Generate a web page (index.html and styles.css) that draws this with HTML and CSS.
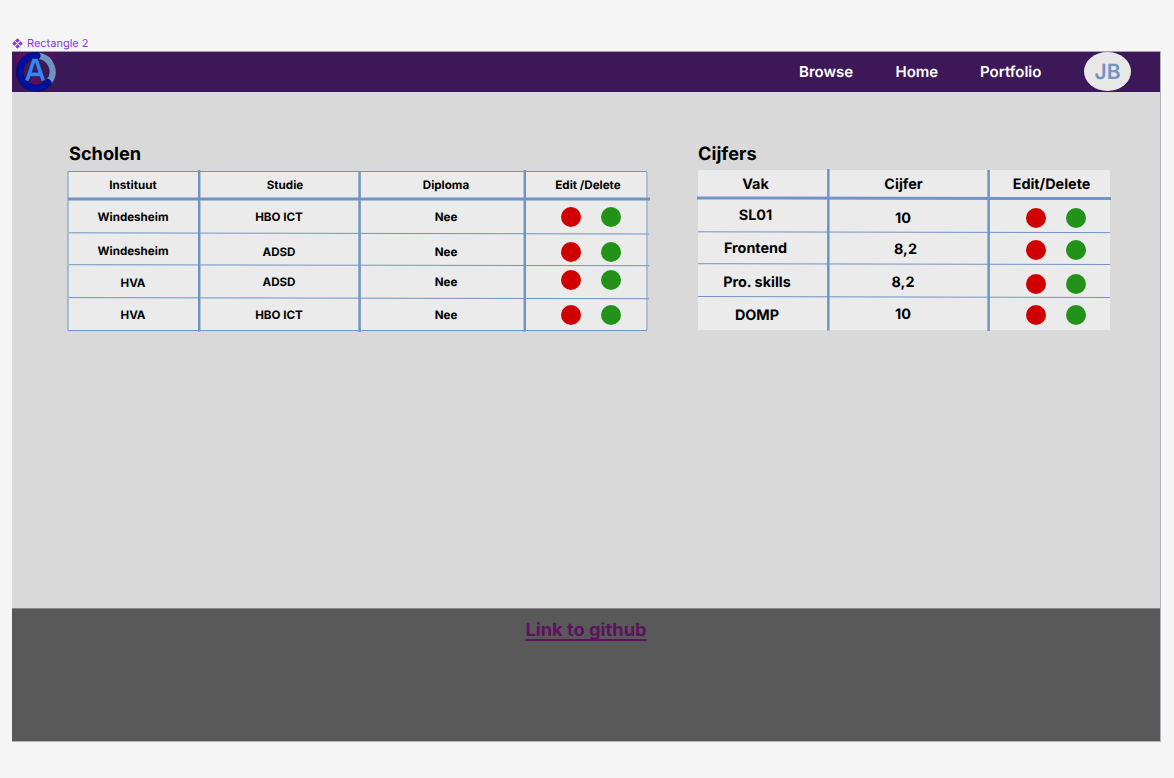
FILE: index.html
```html
<!DOCTYPE html>
<html lang="nl">
<head>
<meta charset="utf-8">
<title>Rectangle 2</title>
<link rel="stylesheet" href="styles.css">
</head>
<body>
<div class="frame-label">
  <svg class="component-icon" viewBox="0 0 12 12"><path d="M6 .2 8.500 2.700 6 5.200 3.500 2.700ZM6 6.800 8.500 9.300 6 11.800 3.500 9.300ZM2.700 3.500 5.200 6 2.700 8.500.2 6ZM9.300 3.500 11.800 6 9.300 8.500 6.800 6Z"/></svg>
  <span>Rectangle 2</span>
</div>
<div class="page">
  <header class="topbar">
    <svg class="logo" viewBox="0 0 44 41">
      <rect x="4" y="1" width="39" height="9.500" fill="#56105c"/>
      <circle cx="24" cy="19.800" r="15" fill="#3d1858"/>
      <path d="M12 9.500h24v1H12z" fill="#56105c"/>
      <path d="M19 25h9v9h-9z" fill="#56105c"/>
      <path d="M27 3.700A16.300 16.300 0 0 1 37 30" fill="none" stroke="#233868" stroke-width="7"/>
      <path d="M27 3.700A16.300 16.300 0 0 1 37 30" fill="none" stroke="#7093c1" stroke-width="6"/>
      <path d="M25 3.800A16.200 16.200 0 1 0 36 30.800" fill="none" stroke="#07095f" stroke-width="7" stroke-linecap="round"/>
      <path d="M25 3.800A16.200 16.200 0 1 0 36 30.800" fill="none" stroke="#00109e" stroke-width="6" stroke-linecap="round"/>
      <path d="M14.800 28.700 21.600 8.500H24.600L31.400 28.700M17.500 22.400H28.600" fill="none" stroke="#2b4c9c" stroke-width="4"/>
      <path d="M15 28.400 21.800 8.700H24.400L31.200 28.400M17.500 22.400H28.600" fill="none" stroke="#3385fa" stroke-width="3.200"/>
    </svg>
    <nav class="nav">
      <a class="browse">Browse</a><a class="home">Home</a><a class="portfolio">Portfolio</a>
    </nav>
    <div class="avatar">JB</div>
  </header>
  <main class="content">
    <section class="schools">
      <h2>Scholen</h2>
      <div class="table">
        <div class="row head"><span>Instituut</span><span class="studie">Studie</span><span class="mid">Diploma</span><span class="actions-head">Edit /Delete</span></div>
        <div class="row r1"><span>Windesheim</span><span>HBO ICT</span><span class="mid">Nee</span><span class="actions"><i class="dot red"></i><i class="dot green"></i></span></div>
        <div class="row r2"><span class="up">Windesheim</span><span>ADSD</span><span class="mid">Nee</span><span class="actions"><i class="dot red"></i><i class="dot green"></i></span></div>
        <div class="row r3"><span class="low">HVA</span><span>ADSD</span><span class="mid">Nee</span><span class="actions"><i class="dot red"></i><i class="dot green"></i></span></div>
        <div class="row r4"><span>HVA</span><span>HBO ICT</span><span class="mid">Nee</span><span class="actions"><i class="dot red"></i><i class="dot green"></i></span></div>
        <svg class="rules" viewBox="0 0 590 170">
          <path class="thin" d="M5 6.500H584V165.500H5Z"/>
          <path class="thin" d="M6 67.800 586 69M6 99.700 586 100.700M6 132.600 586 133.700"/>
          <path class="thick" d="M5 33.900H587"/>
          <path class="bar" d="M136.200 5V166.500M296.600 6V167M461.800 5V166.500"/>
        </svg>
      </div>
    </section>
    <section class="grades">
      <h2>Cijfers</h2>
      <div class="table">
        <div class="row head"><span>Vak</span><span>Cijfer</span><span>Edit/Delete</span></div>
        <div class="row g1"><span>SL01</span><span class="score">10</span><span class="actions"><i class="dot red"></i><i class="dot green"></i></span></div>
        <div class="row g2"><span>Frontend</span><span class="score">8,2</span><span class="actions"><i class="dot red"></i><i class="dot green"></i></span></div>
        <div class="row g3"><span>Pro. skills</span><span class="score">8,2</span><span class="actions"><i class="dot red"></i><i class="dot green"></i></span></div>
        <div class="row g4"><span>DOMP</span><span class="score">10</span><span class="actions"><i class="dot red"></i><i class="dot green"></i></span></div>
        <svg class="rules" viewBox="0 0 422 170">
          <path class="thin" d="M5 66.800 417 67.600M5 98.700 417 99.500M5 131.500 417 132.500"/>
          <path class="thick" d="M4 33 418 33.600"/>
          <path class="bar" d="M135.300 4V165.500M295.600 5V166"/>
        </svg>
      </div>
    </section>
  </main>
  <footer class="footer"><a>Link to github</a></footer>
</div>
</body>
</html>
```
FILE: styles.css
```css
* { box-sizing: border-box; }
body { margin: 0; background: #f5f5f5; font-family: Inter, "Liberation Sans", sans-serif; color: #000; text-rendering: geometricPrecision; }
.frame-label { display: flex; align-items: center; gap: 4px; height: 15px; margin: 36px 0 0 12px; color: #8638e5; font-size: 11px; line-height: 15px; }
.component-icon { width: 11px; height: 11px; margin-bottom: 1px; fill: #8638e5; }
.page { width: 1149px; height: 691px; margin-left: 12px; display: flex; flex-direction: column; border: 1px solid #b9b3bd; border-width: 0 1px 1px 0; background: #d9d9d9; }
.topbar { display: flex; align-items: center; height: 41px; background: #3d1859; border-top: 1px solid #a89bb2; color: #fff; }
.logo { width: 44px; height: 41px; flex: none; }
.nav { display: flex; margin: 0 0 1px 743px; font-size: 15px; font-weight: 600; line-height: 20px; }
.nav a { white-space: nowrap; }
.browse { width: 96.5px; }
.home { width: 84.5px; }
.portfolio { width: 104px; }
.avatar { width: 47px; height: 39px; margin-bottom: 2px; border-radius: 50%; background: #e8e8e8; color: #7194c4; font-size: 21px; font-weight: 600; line-height: 41px; text-align: center; }
.content { display: flex; height: 516px; padding: 49px 0 0 56px; gap: 50px; }
h2 { margin: 0 0 6px 1px; padding-top: 1px; height: 24px; font-size: 18.2px; line-height: 25px; font-weight: 700; }
.schools { width: 580px; }
.grades { width: 412px; }
.grades h2 { margin-left: 0; }
.schools .table { position: relative; background: #ebebeb; font-size: 11.6px; font-weight: 700; height: 160px; }
.grades .table { position: relative; background: #ebebeb; font-size: 14.4px; font-weight: 650; height: 160px; margin-top: -1px; }
.row { display: grid; height: 33px; }
.schools .row { grid-template-columns: 130px 162px 165px 123px; }
.grades .row { grid-template-columns: 130px 160px 122px; }
.row span { display: flex; align-items: center; justify-content: center; white-space: nowrap; }
.row.head { height: 28px; }
.schools .head { height: 27px; margin-bottom: 1px; }
.studie { padding-left: 12px; }
.schools .mid { padding-left: 7px; }
.actions-head { padding-left: 3px; }
.row .actions { gap: 20px; padding-left: 9px; }
.dot { width: 20px; height: 20px; border-radius: 50%; }
.red { background: #d00000; }
.green { background: #229318; }
.schools .r1 { height: 34px; padding-top: 1px; }
.schools .r1 .actions { padding-top: 1px; }
.schools .r2 { height: 32px; padding-top: 6px; }
.schools .r2 .up { padding-bottom: 3px; }
.schools .r3 .low { padding-top: 2px; }
.schools .r3 .actions { padding-bottom: 4px; }
.schools .r3 { padding-top: 1px; }
.grades .row span:first-child { padding-right: 15px; }
.grades .row.head span { padding-top: 1px; }
.grades .head span:nth-child(2) { padding-right: 9px; }
.grades .head span:last-child { padding-left: 5px; }
.grades .score { padding-right: 10px; }
.grades .row .actions { padding-left: 13px; }
.grades .g1 { height: 34px; }
.grades .g1 span:first-child { padding-top: 1px; }
.grades .g1 .score { padding-top: 6px; }
.grades .g1 .actions { padding-top: 5px; }
.grades .g2 { height: 32px; }
.grades .g2 span:first-child { padding-top: 1px; }
.grades .g2 .score { padding: 3px 5px 0 0; }
.grades .g2 .actions { padding-top: 4px; }
.grades .g3 span { padding-top: 3px; }
.grades .g3 .actions { padding-top: 6px; }
.grades .g3 span:first-child, .grades .g4 span:first-child { padding-right: 12px; }
.grades .g4 span:first-child { padding-top: 4px; }
.grades .g4 .score { padding-top: 2px; }
.grades .g4 .actions { padding-top: 3px; }
.rules { position: absolute; left: -5px; top: -6px; height: 170px; fill: none; stroke: #7094c4; }
.schools .rules { width: 590px; }
.grades .rules { width: 422px; top: -5px; }
.thin { stroke-width: 1; }
.thick { stroke-width: 3; }
.bar { stroke-width: 2.500px; }
.footer { flex: 1; background: #595959; border-top: 1px solid #858585; padding-top: 9px; text-align: center; color: #5c125f; font-size: 18.3px; line-height: 25px; font-weight: 700; }
.footer a { text-decoration: underline; text-decoration-thickness: 1.500px; text-underline-offset: 3px; text-decoration-skip-ink: none; }
```
